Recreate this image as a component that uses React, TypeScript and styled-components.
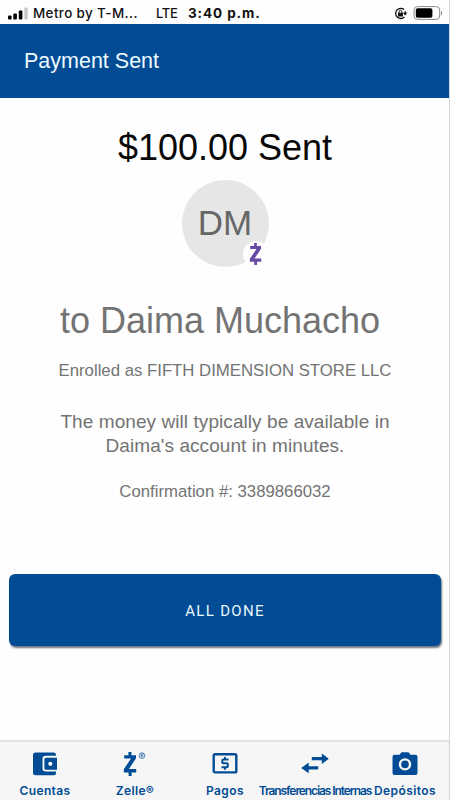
import React from "react";
import styled, { createGlobalStyle } from "styled-components";

const BLUE = "#014c95";

const GlobalStyle = createGlobalStyle`
  * { box-sizing: border-box; }
  body { margin: 0; background: #fff; }
`;

const Screen = styled.div`
  width: 450px;
  height: 800px;
  display: flex;
  flex-direction: column;
  overflow: hidden;
  background: #fefefe;
  font-family: "Liberation Sans", Arial, sans-serif;
  border-right: 1px solid #d4d6d9;
`;

const StatusBar = styled.header`
  height: 24px;
  flex: none;
  display: flex;
  align-items: center;
  padding: 2px 6px 0 8px;
  font-family: Inter, sans-serif;
  font-size: 13px;
  line-height: 22px;
  color: #111;
  white-space: pre;
  svg { flex: none; display: block; }
`;

const Carrier = styled.span`
  width: 123px;
  margin-left: 5px;
  font-weight: 500;
  font-size: 13.4px;
  letter-spacing: 0.4px;
`;

const Network = styled.span`
  width: 32px;
  font-weight: 500;
  letter-spacing: -0.35px;
`;

const Clock = styled.span`
  flex: 1;
  font-weight: 700;
  font-size: 13.5px;
  letter-spacing: 0.9px;
`;

const TitleBar = styled.div`
  height: 74px;
  flex: none;
  display: flex;
  align-items: center;
  width: 450px;
  padding: 0 24px;
  background: ${BLUE};
  color: #eefaff;
  font-size: 21.5px;
`;

const Content = styled.main`
  flex: 1;
  display: flex;
  flex-direction: column;
  align-items: center;
  padding-left: 1px;
  text-align: center;
  color: #737373;
`;

const Line = styled.p<{ $size: number; $height: number; $top?: number; $spacing?: number; $color?: string }>`
  margin: ${(p) => p.$top ?? 0}px 0 0;
  font-size: ${(p) => p.$size}px;
  line-height: ${(p) => p.$height}px;
  letter-spacing: ${(p) => p.$spacing ?? 0}px;
  color: ${(p) => p.$color ?? "inherit"};
  white-space: pre;
`;

const Avatar = styled.div`
  position: relative;
  width: 87px;
  height: 87px;
  margin-top: 12px;
  border-radius: 50%;
  background: #e6e6e6;
  color: #666;
  font-size: 35px;
  line-height: 86px;
`;

const Badge = styled.span`
  position: absolute;
  left: 61px;
  top: 61px;
  width: 26px;
  height: 26px;
  border-radius: 50%;
  background: #fefefe;
  display: grid;
  place-items: center;
`;

const DoneButton = styled.button`
  width: 432px;
  height: 72px;
  margin: 72px 0 0;
  padding: 2px 0 0;
  border: 0;
  border-radius: 6px;
  background: ${BLUE};
  box-shadow: 1px 2px 2px rgba(30, 40, 60, 0.65);
  color: #e8f7ff;
  font-family: Roboto, sans-serif;
  font-size: 15px;
  letter-spacing: 1.3px;
`;

const TabBar = styled.nav`
  height: 60px;
  flex: none;
  display: grid;
  grid-template-columns: repeat(5, 90px);
  width: 450px;
  border-top: 2px solid #e2e2e2;
  background: #f6f6f6;
  color: ${BLUE};
`;

const Tab = styled.a`
  display: flex;
  flex-direction: column;
  align-items: center;
  svg { display: block; flex: none; margin-top: 7px; }
`;

const TabLabel = styled.span<{ $spacing?: number }>`
  margin-top: 4px;
  font-family: Inter, sans-serif;
  font-size: 12px;
  font-weight: 600;
  line-height: 16px;
  white-space: nowrap;
  letter-spacing: ${(p) => p.$spacing ?? 0.3}px;
`;

const zPath = "M1 3.2H5.2V0H8.2V3.2H12.8V6.2L5.7 17H13V20.4H8.4V24H5.4V20.4H.6V17.3L7.8 6.6H1Z";

const SignalIcon = () => (
  <svg width="20" height="13" viewBox="0 0 20 13">
    <rect x="0" y="8.5" width="3.6" height="4" rx="1" fill="#000" />
    <rect x="5.3" y="6.5" width="3.6" height="6" rx="1" fill="#000" />
    <rect x="10.8" y="3.5" width="3.6" height="9" rx="1" fill="#000" />
    <rect x="16.3" y="0.5" width="3.4" height="12" rx="1" fill="#c8c8c8" />
  </svg>
);

const LockIcon = () => (
  <svg width="14" height="13" viewBox="0 0 14 13" fill="none" stroke="#111">
    <path d="M10.2 2.6A5.1 5.1 0 1 0 10.4 10M11 4.2A5.1 5.1 0 0 1 11.2 7" strokeWidth="1.3" />
    <path d="M8.9 5.8h4.400L11.200 8.500Z" fill="#111" stroke="none" />
    <rect x="4" y="5.8" width="5" height="3.8" rx=".5" fill="#111" stroke="none" />
    <path d="M5.1 6V4.7a1.4 1.4 0 0 1 2.8 0V6" />
  </svg>
);

const BatteryIcon = () => (
  <svg width="30" height="14" viewBox="0 0 30 14">
    <rect x="1.1" y=".6" width="25.6" height="12.8" rx="3.4" fill="none" stroke="#8b8b8b" />
    <rect x="2.8" y="2.3" width="16.6" height="9.4" rx="1.8" fill="#000" />
    <path d="M28 5v4.200c1.500-.5 1.500-3.700 0-4.200Z" fill="#8b8b8b" />
  </svg>
);

const WalletIcon = () => (
  <svg width="26" height="30" viewBox="0 0 26 30">
    <path d="M3.5 3.5h18A2.5 2.5 0 0 1 24 6v.8H13.5A3 3 0 0 0 10.5 9.8v9.8a3 3 0 0 0 3 3H24v1.2a2.5 2.5 0 0 1-2.5 2.5h-18A2.5 2.5 0 0 1 1 23.8V6a2.5 2.5 0 0 1 2.5-2.5Z" fill="currentColor" />
    <path fillRule="evenodd" d="M14 8.8h11v12H14a1.6 1.6 0 0 1-1.6-1.6v-8.8A1.6 1.6 0 0 1 14 8.8Zm4.3 3.9a2.1 2.1 0 1 0 0 4.2a2.1 2.1 0 0 0 0-4.2Z" fill="currentColor" />
  </svg>
);

const ZelleIcon = () => (
  <svg width="26" height="30" viewBox="0 0 26 30">
    <path d={zPath} transform="translate(1.2 3)" fill="currentColor" />
    <circle cx="20" cy="6.6" r="2.8" fill="none" stroke="currentColor" strokeWidth=".7" />
    <path d="M19.2 8.2V5.1h1q1 0 1 .8t-1 .8h-1m1 0 1 1.5" fill="none" stroke="currentColor" strokeWidth=".6" />
  </svg>
);

const PayIcon = () => (
  <svg width="26" height="30" viewBox="0 0 26 30">
    <rect x="1.7" y="5.2" width="22.6" height="18.2" rx="1.4" fill="none" stroke="currentColor" strokeWidth="2.4" />
    <path d="M16.6 10.4h-5.3q-1 0-1 1v1.9q0 1 1 1h3.5q1 0 1 1v2q0 1-1 1H9.5M13 8v2.4M13 18.3v2.5" fill="none" stroke="currentColor" strokeWidth="2" />
  </svg>
);

const TransferIcon = () => (
  <svg width="30" height="30" viewBox="0 0 30 30" fill="currentColor">
    <path d="M11.8 8.1h10V4.4l7 5.3-7 5.3v-3.7h-10Z" />
    <path d="M18.2 20.500h-9.500v3.700l-7.500-5.300 7.500-5.300v3.700h9.500Z" />
  </svg>
);

const CameraIcon = () => (
  <svg width="26" height="30" viewBox="0 0 26 30">
    <path d="M2.5 5.8h5l2-2.6h7l2 2.6h5q2 0 2 2V24q0 2-2 2h-21q-2 0-2-2V7.8q0-2 2-2Z" fill="currentColor" />
    <circle cx="13" cy="15.4" r="5" fill="none" stroke="#f6f6f6" strokeWidth="2.4" />
  </svg>
);

const tabs = [
  { label: "Cuentas", Icon: WalletIcon, spacing: 0.4 },
  { label: "Zelle®", Icon: ZelleIcon, spacing: 0.4 },
  { label: "Pagos", Icon: PayIcon, spacing: 0.4 },
  { label: "Transferencias Internas", Icon: TransferIcon, spacing: -1.08 },
  { label: "Depósitos", Icon: CameraIcon, spacing: 0.4 },
];

export default function App() {
  return (
    <Screen>
      <GlobalStyle />
      <StatusBar>
        <SignalIcon />
        <Carrier>Metro by T-M...</Carrier>
        <Network>LTE</Network>
        <Clock>3:40 p.m.</Clock>
        <LockIcon />
        <svg width="5" height="1" />
        <BatteryIcon />
      </StatusBar>
      <TitleBar>Payment Sent</TitleBar>
      <Content>
        <Line $size={36} $height={40} $top={30} $color="#080808">$100.00 Sent</Line>
        <Avatar>
          DM
          <Badge>
            <svg width="13" height="22" viewBox="0 0 13.5 24">
              <path d={zPath} fill="#654ba3" />
            </svg>
          </Badge>
        </Avatar>
        <Line $size={36} $height={40} $top={34}>{"to Daima Muchacho "}</Line>
        <Line $size={16.75} $height={20} $top={20}>Enrolled as FIFTH DIMENSION STORE LLC</Line>
        <Line $size={19} $height={24} $top={29} $spacing={0.07}>{"The money will typically be available in\nDaima's account in minutes."}</Line>
        <Line $size={16.75} $height={20} $top={24}>Confirmation #: 3389866032</Line>
        <DoneButton>ALL DONE</DoneButton>
      </Content>
      <TabBar>
        {tabs.map(({ label, Icon, spacing }) => (
          <Tab key={label}>
            <Icon />
            <TabLabel $spacing={spacing}>{label}</TabLabel>
          </Tab>
        ))}
      </TabBar>
    </Screen>
  );
}
